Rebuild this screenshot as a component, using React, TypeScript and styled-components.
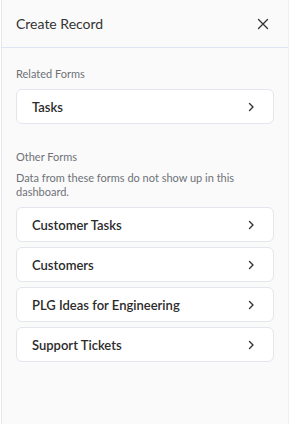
import React from "react";
import styled, { createGlobalStyle } from "styled-components";

const GlobalStyle = createGlobalStyle`
  html, body {
    margin: 0;
    padding: 0;
    background: #ffffff;
  }
  body {
    font-family: Lato, "Open Sans", sans-serif;
    -webkit-font-smoothing: antialiased;
  }
`;

const relatedForms = ["Tasks"];
const otherForms = [
  "Customer Tasks",
  "Customers",
  "PLG Ideas for Engineering",
  "Support Tickets",
];

const ChevronIcon = () => (
  <svg width="10" height="10" viewBox="0 0 10 10" fill="none">
    <path
      d="M3.5 1.5 L7 5 L3.5 8.5"
      stroke="#333"
      strokeWidth="1.4"
      strokeLinecap="round"
      strokeLinejoin="round"
    />
  </svg>
);

const CloseIcon = () => (
  <svg width="12" height="12" viewBox="0 0 12 12" fill="none">
    <path
      d="M1.5 1.5 L10.5 10.5 M10.5 1.5 L1.5 10.5"
      stroke="#333"
      strokeWidth="1.3"
      strokeLinecap="round"
    />
  </svg>
);

const FormCard = ({ title }: { title: string }) => (
  <Card>
    <CardTitle>{title}</CardTitle>
    <ChevronIcon />
  </Card>
);

const App = () => {
  return (
    <>
      <GlobalStyle />
      <Panel>
        <Header>
          <Title>Create Record</Title>
          <CloseButton aria-label="Close">
            <CloseIcon />
          </CloseButton>
        </Header>
        <Body>
          <Section>
            <SectionLabel>Related Forms</SectionLabel>
            <CardList>
              {relatedForms.map((f) => (
                <FormCard key={f} title={f} />
              ))}
            </CardList>
          </Section>
          <Section>
            <SectionLabel>Other Forms</SectionLabel>
            <Hint>Data from these forms do not show up in this dashboard.</Hint>
            <CardList>
              {otherForms.map((f) => (
                <FormCard key={f} title={f} />
              ))}
            </CardList>
          </Section>
        </Body>
      </Panel>
    </>
  );
};

export default App;

const Panel = styled.div`
  width: 288px;
  height: 424px;
  margin-left: 1px;
  background: #fafafa;
  border-left: 1px solid #e3e6ee;
  border-right: 1px solid #eef0f4;
  box-sizing: border-box;
  display: flex;
  flex-direction: column;
`;

const Header = styled.div`
  height: 48px;
  box-sizing: border-box;
  padding: 0 14px 0 14px;
  border-bottom: 1px solid #dfe4f2;
  display: flex;
  align-items: center;
  justify-content: space-between;
`;

const Title = styled.h1`
  margin: 0;
  font-size: 14px;
  font-weight: 400;
  color: #333;
`;

const CloseButton = styled.button`
  width: 22px;
  height: 22px;
  border: none;
  background: transparent;
  padding: 0;
  display: flex;
  align-items: center;
  justify-content: center;
  cursor: pointer;
`;

const Body = styled.div`
  padding: 18px 14px 0 14px;
  display: flex;
  flex-direction: column;
  gap: 25px;
`;

const Section = styled.div`
  display: flex;
  flex-direction: column;
`;

const SectionLabel = styled.div`
  font-size: 11px;
  line-height: 16px;
  color: #6e7278;
  margin-bottom: 7px;
`;

const Hint = styled.div`
  font-size: 11px;
  line-height: 14px;
  color: #6e7278;
  margin-top: -1px;
  margin-bottom: 8px;
`;

const CardList = styled.div`
  display: flex;
  flex-direction: column;
  gap: 5px;
`;

const Card = styled.div`
  height: 35px;
  box-sizing: border-box;
  background: #ffffff;
  border: 1px solid #e3e6ee;
  border-radius: 6px;
  padding: 0 17px 0 15px;
  display: flex;
  align-items: center;
  justify-content: space-between;
  cursor: pointer;
`;

const CardTitle = styled.span`
  font-size: 13px;
  font-weight: 600;
  color: #2b2b2b;
`;
